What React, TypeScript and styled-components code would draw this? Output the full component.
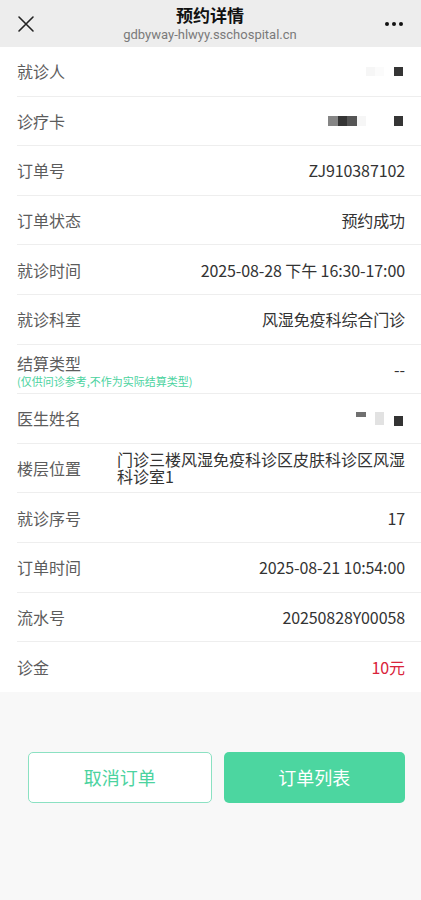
import * as React from "react"
import styled, { createGlobalStyle } from "styled-components"

const Global = createGlobalStyle`
  html, body { margin: 0; padding: 0; background: #f8f8f8; }
  body { font-family: "Noto Sans CJK SC", "Noto Sans", sans-serif; }
  * { box-sizing: border-box; }
`

type Cell = { w: number; h: number; c: string; mt?: number; ml?: number }

const rows: { label: string; value?: string; mosaic?: Cell[]; red?: boolean; note?: string; wrap?: boolean }[] = [
  { label: "就诊人", mosaic: [
    { w: 9, h: 9, c: "#f6f6f6", ml: 0 }, { w: 9, h: 9, c: "#fbfbfb", ml: 0 }, { w: 9, h: 9, c: "#353535", ml: 10 },
  ] },
  { label: "诊疗卡", mosaic: [
    { w: 10, h: 10, c: "#858585" }, { w: 9, h: 10, c: "#353535" }, { w: 10, h: 10, c: "#555" },
    { w: 9, h: 10, c: "#f6f6f6" }, { w: 9, h: 10, c: "#353535", ml: 28 },
  ] },
  { label: "订单号", value: "ZJ910387102" },
  { label: "订单状态", value: "预约成功" },
  { label: "就诊时间", value: "2025-08-28 下午 16:30-17:00" },
  { label: "就诊科室", value: "风湿免疫科综合门诊" },
  { label: "结算类型", value: "--", note: "(仅供问诊参考,不作为实际结算类型)" },
  { label: "医生姓名", mosaic: [
    { w: 10, h: 5, c: "#707070", mt: -8 }, { w: 9, h: 13, c: "#e2e2e2", ml: 9, mt: 0 }, { w: 9, h: 10, c: "#333", ml: 10, mt: 5 },
  ] },
  { label: "楼层位置", value: "门诊三楼风湿免疫科诊区皮肤科诊区风湿科诊室1", wrap: true },
  { label: "就诊序号", value: "17" },
  { label: "订单时间", value: "2025-08-21 10:54:00" },
  { label: "流水号", value: "20250828Y00058" },
  { label: "诊金", value: "10元", red: true },
]

export default function App() {
  return (
    <Page>
      <Global />
      <Header>
        <IconBtn aria-label="close">
          <svg width="18" height="18" viewBox="0 0 18 18">
            <path d="M2 2 L16 16 M16 2 L2 16" stroke="#222" strokeWidth="1.6" strokeLinecap="round" />
          </svg>
        </IconBtn>
        <TitleBox>
          <Title>预约详情</Title>
          <Url>gdbyway-hlwyy.sschospital.cn</Url>
        </TitleBox>
        <IconBtn aria-label="more">
          <svg width="20" height="6" viewBox="0 0 20 6">
            <circle cx="3" cy="3" r="2" fill="#111" />
            <circle cx="10" cy="3" r="2" fill="#111" />
            <circle cx="17" cy="3" r="2" fill="#111" />
          </svg>
        </IconBtn>
      </Header>
      <List>
        {rows.map((r, i) => (
          <Row key={r.label} $last={i === rows.length - 1}>
            {r.note ? (
              <LabelBox>
                <Label>{r.label}</Label>
                <Note>{r.note}</Note>
              </LabelBox>
            ) : (
              <Label>{r.label}</Label>
            )}
            {r.mosaic ? (
              <Mosaic>
                {r.mosaic.map((m, j) => (
                  <Block key={j} $w={m.w} $h={m.h} $c={m.c} $mt={m.mt || 0} $ml={m.ml || 0} />
                ))}
              </Mosaic>
            ) : r.wrap ? (
              <WrapValue>{r.value}</WrapValue>
            ) : (
              <Value $red={r.red}>{r.value}</Value>
            )}
          </Row>
        ))}
      </List>
      <Actions>
        <OutlineBtn>取消订单</OutlineBtn>
        <SolidBtn>订单列表</SolidBtn>
      </Actions>
    </Page>
  )
}

const Page = styled.div`
  width: 421px;
  min-height: 900px;
  background: #f8f8f8;
`

const Header = styled.div`
  height: 47px;
  background: #ededed;
  display: flex;
  align-items: center;
  justify-content: space-between;
  padding: 0 12px 0 11px;
`

const IconBtn = styled.div`
  width: 30px;
  display: flex;
  align-items: center;
  justify-content: center;
`

const TitleBox = styled.div`
  display: flex;
  flex-direction: column;
  align-items: center;
  padding-top: 1px;
`

const Title = styled.div`
  font-size: 17px;
  font-weight: 600;
  color: #111;
  line-height: 22px;
`

const Url = styled.div`
  font-family: "Roboto", "Noto Sans", sans-serif;
  font-size: 13px;
  color: #7a7a7a;
  line-height: 18px;
`

const List = styled.div`
  background: #fff;
  padding-left: 17px;
`

const Row = styled.div<{ $last?: boolean }>`
  height: 49.6px;
  display: flex;
  align-items: center;
  justify-content: space-between;
  padding-right: 16px;
  border-bottom: ${(p) => (p.$last ? "none" : "1px solid #eeeeee")};
`

const LabelBox = styled.div`
  display: flex;
  flex-direction: column;
  margin-top: 2px;
`

const Label = styled.div`
  font-size: 16px;
  color: #5c5c5c;
  white-space: nowrap;
  line-height: 22px;
`

const Note = styled.div`
  font-size: 11px;
  color: #4cd3a0;
  line-height: 14px;
`

const Value = styled.div<{ $red?: boolean }>`
  font-size: 16px;
  letter-spacing: -0.1px;
  color: ${(p) => (p.$red ? "#d9233a" : "#333")};
  white-space: nowrap;
`

const WrapValue = styled.div`
  font-size: 16px;
  color: #333;
  line-height: 17px;
  width: 288px;
  margin-left: 27px;
`

const Mosaic = styled.div`
  display: flex;
  align-items: center;
  margin-right: 2px;
`

const Block = styled.div<{ $w: number; $h: number; $c: string; $mt: number; $ml: number }>`
  width: ${(p) => p.$w}px;
  height: ${(p) => p.$h}px;
  background: ${(p) => p.$c};
  margin-top: ${(p) => p.$mt}px;
  margin-left: ${(p) => p.$ml}px;
`

const Actions = styled.div`
  display: flex;
  gap: 12px;
  padding: 60px 16px 0 28px;
`

const BaseBtn = styled.div`
  flex: 1;
  height: 51px;
  border-radius: 5px;
  display: flex;
  align-items: center;
  justify-content: center;
  font-size: 18px;
`

const OutlineBtn = styled(BaseBtn)`
  background: #fff;
  border: 1px solid #8be1c2;
  color: #4cd3a0;
`

const SolidBtn = styled(BaseBtn)`
  background: #4cd6a0;
  color: #fff;
`
